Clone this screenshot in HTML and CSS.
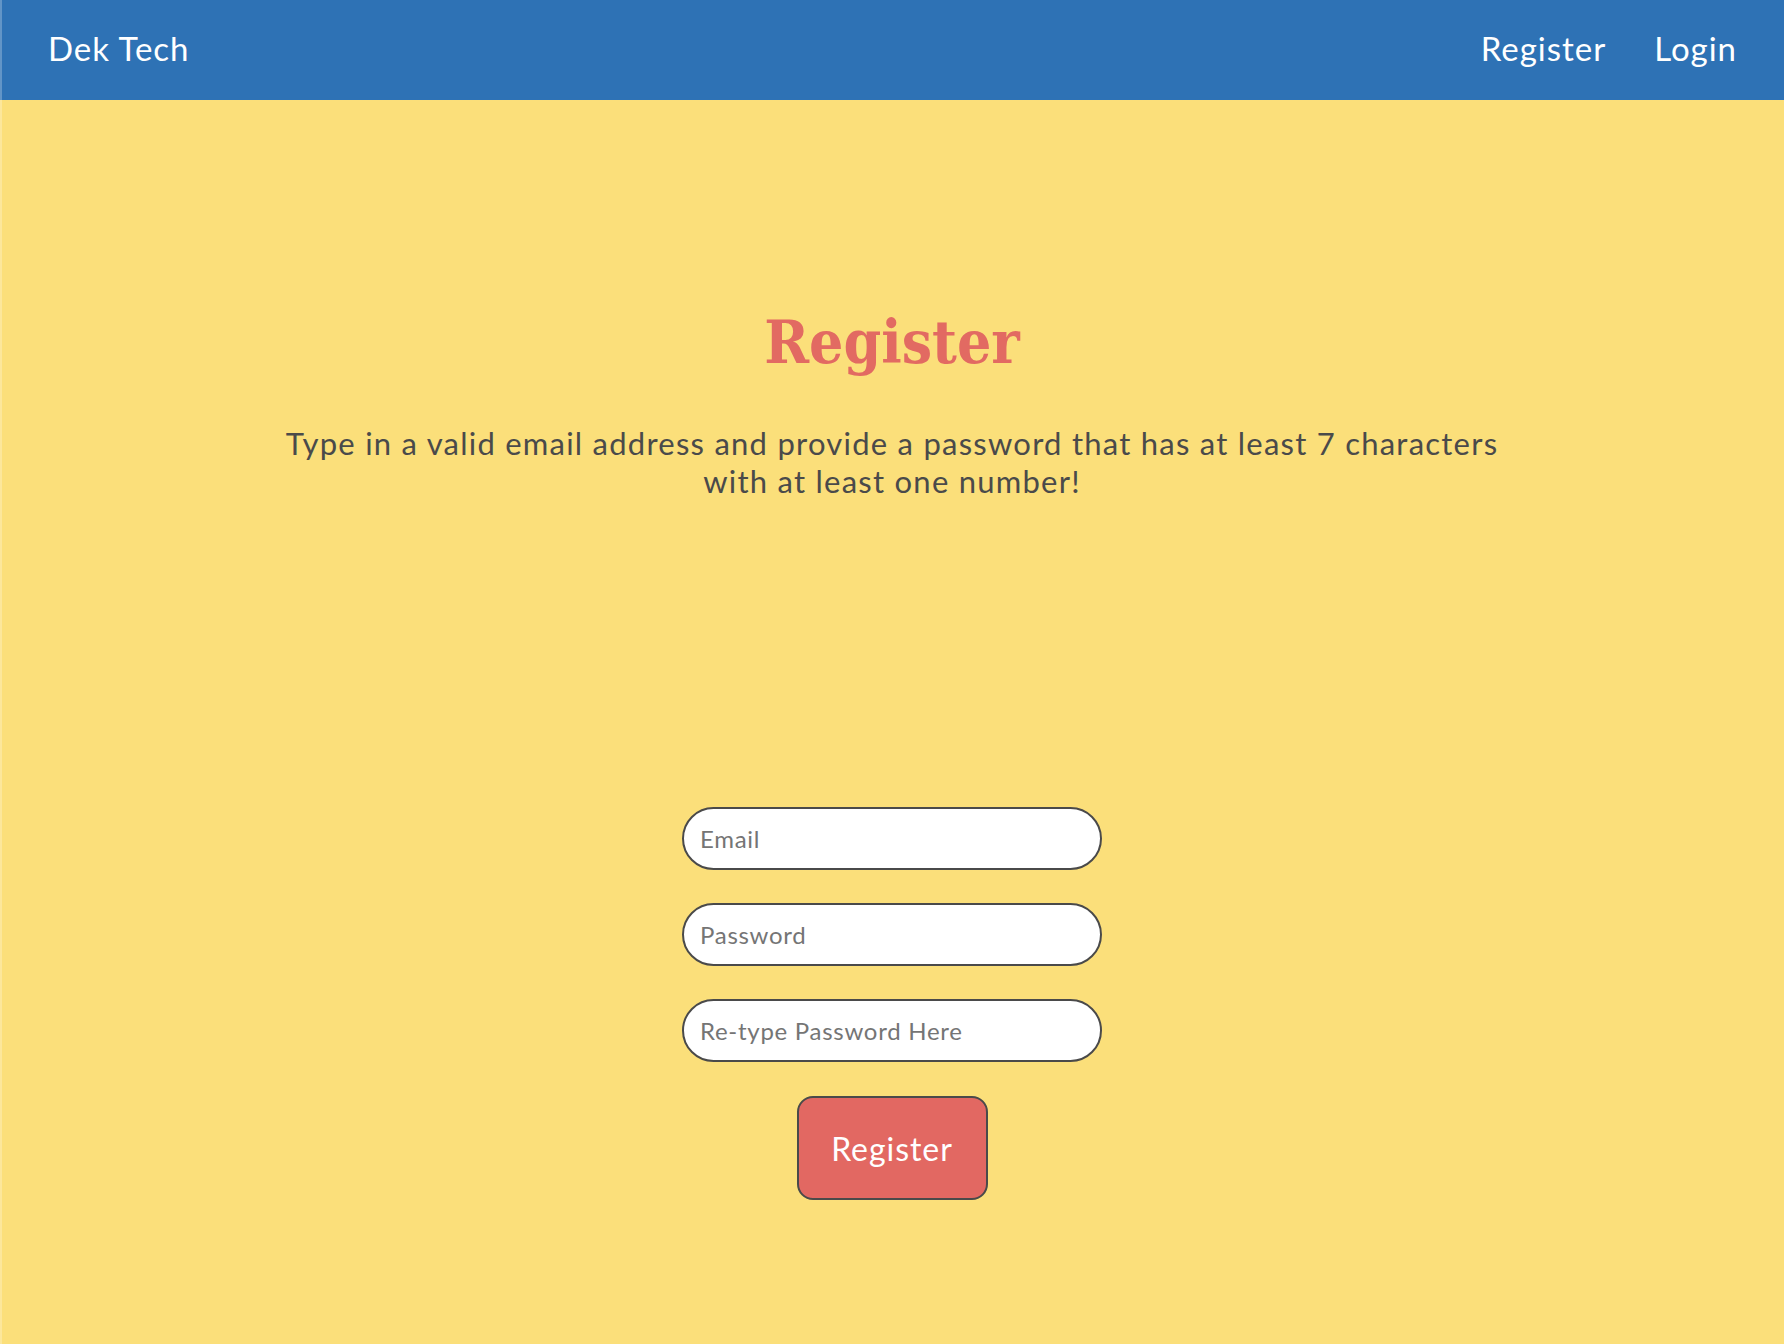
FILE: index.html
```html
<!DOCTYPE html>
<html lang="en">
<head>
<meta charset="utf-8">
<title>Dek Tech - Register</title>
<link rel="stylesheet" href="styles.css">
</head>
<body>
<nav class="navbar">
  <a class="brand" href="#">Dek Tech</a>
  <div class="nav-links">
    <a href="#">Register</a>
    <a href="#">Login</a>
  </div>
</nav>
<main class="page">
  <h1 class="title">Register</h1>
  <p class="intro">Type in a valid email address and provide a password that has at least 7 characters with at least one number!</p>
  <form class="form">
    <input class="field" type="email" placeholder="Email">
    <input class="field" type="password" placeholder="Password">
    <input class="field" type="password" placeholder="Re-type Password Here">
    <button class="btn" type="button">Register</button>
  </form>
</main>
</body>
</html>
```

FILE: styles.css
```css
html, body {
  margin: 0;
  padding: 0;
}
body {
  font-family: Lato, "Open Sans", sans-serif;
  background: #fbdf7a;
  color: #4a4a4a;
  min-height: 100vh;
}
.navbar {
  height: 100px;
  box-sizing: border-box;
  background: #2e72b5;
  display: flex;
  align-items: center;
  justify-content: space-between;
  padding: 0 47px 4px 48px;
  box-shadow: inset 2px 0 rgba(255,255,255,0.25);
}
.navbar a {
  color: #ffffff;
  text-decoration: none;
  font-size: 33px;
  letter-spacing: 0.03em;
}
.nav-links {
  display: flex;
  gap: 48px;
}
.page {
  min-height: calc(100vh - 100px);
  box-shadow: inset 2px 0 rgba(255,255,255,0.25);
  text-align: center;
  padding-top: 202px;
  box-sizing: border-box;
}
.title {
  font-family: "DejaVu Serif Condensed", "DejaVu Serif", serif;
  font-stretch: condensed;
  font-weight: bold;
  color: #e26a62;
  font-size: 60px;
  line-height: 80px;
  margin: 0;
}
.intro {
  font-size: 31px;
  line-height: 38px;
  letter-spacing: 0.04em;
  max-width: 1240px;
  margin: 42px auto 0;
}
.form {
  display: flex;
  flex-direction: column;
  align-items: center;
  gap: 33px;
  margin-top: 307px;
}
.field {
  width: 420px;
  height: 63px;
  box-sizing: border-box;
  border: 2px solid #4a4a4a;
  border-radius: 32px;
  background: #ffffff;
  padding: 0 16px;
  font-family: Lato, "Open Sans", sans-serif;
  font-size: 24px;
  letter-spacing: 0.03em;
  color: #4a4a4a;
  outline: none;
}
.field::placeholder {
  color: #757575;
}
.btn {
  width: 191px;
  height: 104px;
  box-sizing: border-box;
  border: 2px solid #4a4a4a;
  border-radius: 16px;
  background: #e26862;
  color: #ffffff;
  font-family: Lato, "Open Sans", sans-serif;
  font-size: 32px;
  letter-spacing: 0.03em;
  cursor: pointer;
  margin-top: 1px;
}
```
